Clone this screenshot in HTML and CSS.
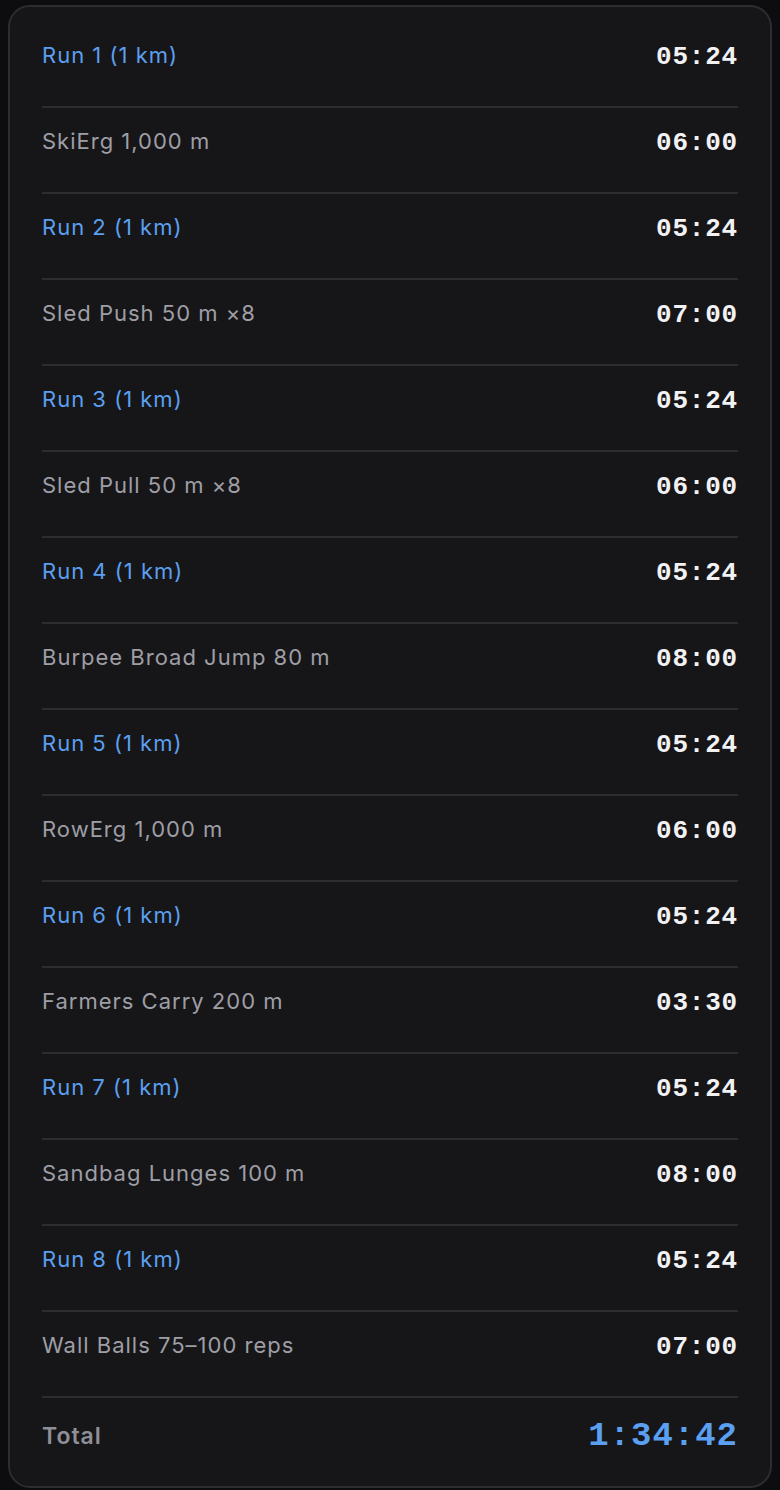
FILE: index.html
```html
<!DOCTYPE html>
<html lang="en">
<head>
    <meta charset="UTF-8">
    <meta name="viewport" content="width=device-width, initial-scale=1.0">
    <title>Race Splits</title>
    <link rel="stylesheet" href="styles.css">
</head>
<body>
    <div class="card">
        <div class="row run"><span class="label">Run 1 (1 km)</span><span class="time">05:24</span></div>
        <div class="row"><span class="label">SkiErg 1,000 m</span><span class="time">06:00</span></div>
        <div class="row run"><span class="label">Run 2 (1 km)</span><span class="time">05:24</span></div>
        <div class="row"><span class="label">Sled Push 50 m ×8</span><span class="time">07:00</span></div>
        <div class="row run"><span class="label">Run 3 (1 km)</span><span class="time">05:24</span></div>
        <div class="row"><span class="label">Sled Pull 50 m ×8</span><span class="time">06:00</span></div>
        <div class="row run"><span class="label">Run 4 (1 km)</span><span class="time">05:24</span></div>
        <div class="row"><span class="label">Burpee Broad Jump 80 m</span><span class="time">08:00</span></div>
        <div class="row run"><span class="label">Run 5 (1 km)</span><span class="time">05:24</span></div>
        <div class="row"><span class="label">RowErg 1,000 m</span><span class="time">06:00</span></div>
        <div class="row run"><span class="label">Run 6 (1 km)</span><span class="time">05:24</span></div>
        <div class="row"><span class="label">Farmers Carry 200 m</span><span class="time">03:30</span></div>
        <div class="row run"><span class="label">Run 7 (1 km)</span><span class="time">05:24</span></div>
        <div class="row"><span class="label">Sandbag Lunges 100 m</span><span class="time">08:00</span></div>
        <div class="row run"><span class="label">Run 8 (1 km)</span><span class="time">05:24</span></div>
        <div class="row"><span class="label">Wall Balls 75–100 reps</span><span class="time">07:00</span></div>
        <div class="row total"><span class="label">Total</span><span class="time">1:34:42</span></div>
    </div>
</body>
</html>
```

FILE: styles.css
```css
body {
    margin: 0;
    background-color: #0d0d0f;
    font-family: Inter, "Noto Sans", sans-serif;
}
.card {
    margin: 5px 8px 0;
    padding: 15px 32px 0;
    border: 2px solid #2c2c31;
    border-radius: 22px;
    background-color: #161618;
}
.row {
    display: flex;
    justify-content: space-between;
    align-items: center;
    height: 26px;
    padding: 20px 0 38px;
    border-bottom: 2px solid #2c2c31;
}
.label {
    font-size: 22px;
    letter-spacing: 1px;
    color: #9e9ea6;
}
.run .label {
    color: #5b9ff0;
}
.time {
    font-family: "Liberation Mono", monospace;
    font-weight: bold;
    font-size: 26px;
    letter-spacing: 0.8px;
    padding-top: 3px;
    color: #f2f2f4;
}
.total {
    height: 36px;
    padding: 20px 0 32px;
    border-bottom: none;
}
.total .label {
    font-weight: 600;
    font-size: 23px;
    color: #8f8f98;
}
.total .time {
    font-size: 34px;
    letter-spacing: 1px;
    padding-top: 0;
    color: #5b9ff0;
}
```
